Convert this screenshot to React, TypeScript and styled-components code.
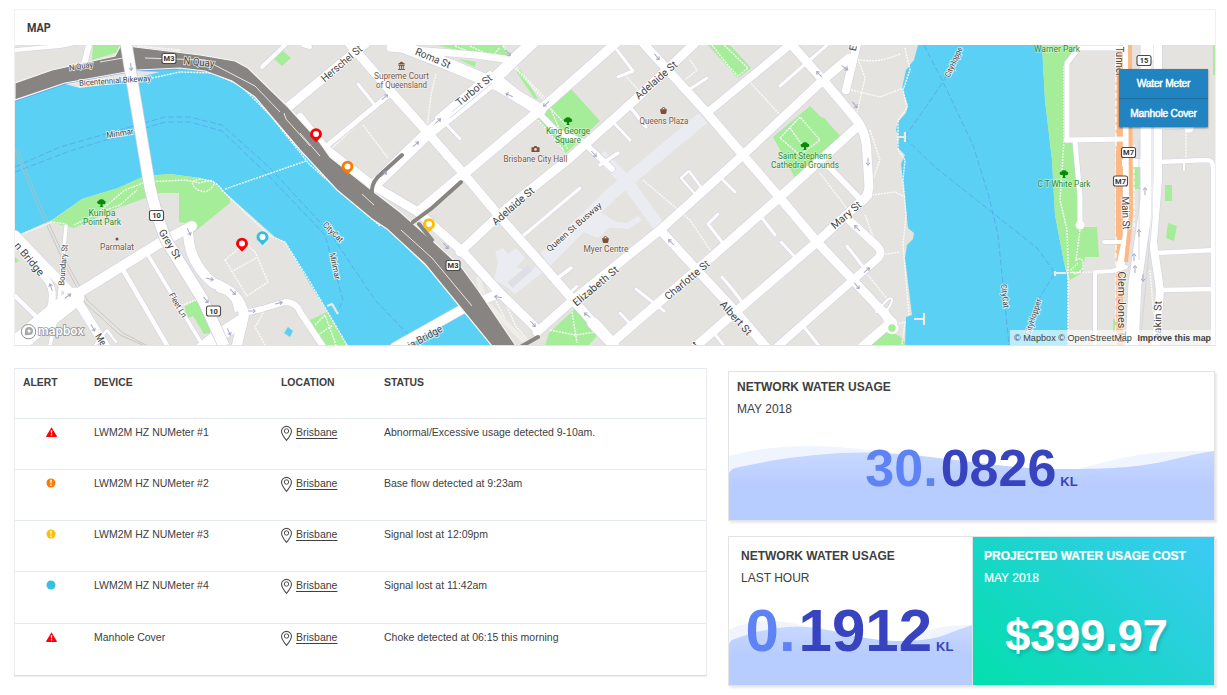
import React from "react";
import styled, { createGlobalStyle } from "styled-components";

const GlobalStyle = createGlobalStyle`
  * { box-sizing: border-box; }
  body { margin: 0; background: #fff; color: #404040; font-family: "Liberation Sans", Arial, sans-serif; }
`;

const Page = styled.main`
  width: 1227px;
  height: 695px;
  padding: 9px 11px 0 14px;
  overflow: hidden;
`;

const MapPanel = styled.section`
  width: 1202px;
  height: 337px;
  border: 1px solid #f0f0f2;
  border-bottom-color: #e4e4e4;
`;

const MapHeader = styled.h2`
  height: 35px;
  margin: 0;
  padding-left: 12px;
  line-height: 34px;
  font-family: Roboto, sans-serif;
  font-weight: 700;
  font-size: 13.5px;
  color: #3c3c3c;
  span { display: inline-block; transform: scaleX(0.8); transform-origin: left; }
`;

const MapArea = styled.div`
  position: relative;
  height: 300px;
  > svg { display: block; }
`;

const Toggle = styled.div`
  position: absolute;
  top: 24px;
  right: 7px;
  width: 89px;
  display: flex;
  flex-direction: column;
  box-shadow: 0 1px 2px rgba(0, 0, 0, 0.5);
`;

const ToggleButton = styled.button`
  height: 29px;
  border: 0;
  padding: 0;
  background: #2184c0;
  color: #fff;
  font: 10.2px "Liberation Sans", Arial, sans-serif;
  letter-spacing: -0.2px;
  -webkit-text-stroke: 0.45px #fff;
  & + & { border-top: 1px solid #1a6d9f; }
`;

const Attribution = styled.div`
  position: absolute;
  right: 0;
  bottom: 0;
  width: 205px;
  height: 15px;
  padding: 0 4px;
  display: flex;
  justify-content: space-between;
  align-items: center;
  background: rgba(255, 255, 255, 0.6);
  font-size: 9.15px;
  white-space: nowrap;
  color: #404040;
  b { font-size: 8.9px; }
`;

const Lower = styled.div`
  display: flex;
  align-items: flex-start;
  gap: 21px;
  margin-top: 22px;
`;

const Table = styled.section`
  width: 693px;
  height: 308px;
  flex: none;
  border: 1px solid #ececf0;
  border-top-color: #e4e9f5;
  border-bottom-color: #dcdcde;
  box-shadow: 0 1px 1px #f0f0f0;
  font-size: 10.5px;
  line-height: 13px;
`;

const Row = styled.div<{ $h: number; $head?: boolean }>`
  display: grid;
  grid-template-columns: 79px 187px 103px 1fr;
  height: ${(p) => p.$h}px;
  border-top: ${(p) => (p.$head ? "0" : "1px solid #e4e9f5")};
  padding-top: 7px;
  font-weight: ${(p) => (p.$head ? 700 : 400)};
`;

const AlertCell = styled.div`
  padding-left: 31px;
  svg { display: block; margin-top: 1px; }
`;
const HeadCell = styled.div<{ $pad?: number }>`
  padding-left: ${(p) => p.$pad ?? 0}px;
  font-size: 10.4px;
`;
const Place = styled.div`
  display: flex;
  gap: 4px;
  align-items: flex-start;
  svg { overflow: visible; }
`;
const PlaceLink = styled.a`
  text-decoration: underline;
  text-underline-offset: 1.5px;
`;

const Cards = styled.div`
  display: flex;
  flex-direction: column;
  gap: 15px;
  padding-top: 3px;
`;

const CardRow = styled.div`
  display: flex;
  width: 487px;
  height: 150px;
  border: 1px solid #e3e3e6;
  box-shadow: 2px 2px 2px #e9e9ea;
`;

const Card = styled.article<{ $pad: string; $cost?: boolean; $divider?: boolean }>`
  position: relative;
  flex: 1;
  padding: ${(p) => p.$pad};
  overflow: hidden;
  border-right: ${(p) => (p.$divider ? "1px solid #dfe3ea" : "0")};
  background: ${(p) => (p.$cost ? "linear-gradient(45deg, #02e0ad 0%, #1bd5cb 45%, #3dcaf5 100%)" : "#fff")};
  color: ${(p) => (p.$cost ? "#fff" : "#404040")};
  -webkit-text-stroke: ${(p) => (p.$cost ? "0.2px #fff" : "0")};
`;

const CardTitle = styled.h3`
  position: relative;
  margin: 0;
  font-size: 12px;
  line-height: 14px;
`;
const CardSub = styled.div`
  position: relative;
  margin-top: 8px;
  font-size: 12px;
  line-height: 14px;
`;

const WaveSvg = styled.svg<{ $h: number }>`
  position: absolute;
  left: 0;
  bottom: 0;
  width: 100%;
  height: ${(p) => p.$h}px;
  display: block;
`;

const Figure = styled.div<{ $size: number; $top: number; $shift?: number }>`
  position: relative;
  display: flex;
  justify-content: center;
  align-items: baseline;
  margin-top: ${(p) => p.$top}px;
  margin-left: ${(p) => p.$shift ?? 0}px;
  font-size: ${(p) => p.$size}px;
  line-height: 60px;
  font-weight: 700;
  color: #3743bf;
`;
const Whole = styled.span`
  color: #5d83f5;
  margin-right: 3px;
`;
const Unit = styled.span`
  margin-left: 4px;
  font-size: 13px;
`;
const Cost = styled(Figure)`
  color: #fff;
  text-shadow: 2px 3px 3px rgba(0, 80, 100, 0.22);
`;

type Road = [string, number];

const roads: Road[] = [
  ["M15 50 L60 46 L90 40", 4],
  ["M89 45 L84 65", 6],
  ["M15 235 L75 297 L108 350", 9],
  ["M15 240 L47 280 Q56 292 50 310 L48 320", 7],
  ["M66 226 L62 270 L58 310 L50 345", 3.5],
  ["M75 297 L48 318 L15 346", 19],
  ["M72 297 L158 244 L192 226", 10],
  ["M15 296 L40 320", 4.5],
  ["M122 268 L168 347", 4.5],
  ["M148 255 L200 341", 3.5],
  ["M188 230 Q188 262 213 283 Q240 292 244 315 L237 345", 10],
  ["M218 290 Q235 294 236 310", 4],
  ["M244 313 L262 309 L285 302 Q296 302 300 312 L324 348", 6],
  ["M200 350 L215 338 L240 322", 13],
  ["M95 345 L107 330 L116 342", 2.5],
  ["M287 108 L366 43", 9],
  ["M262 67 L285 45", 4],
  ["M303 45 L310 47", 4],
  ["M300 117 L325 148 L374 186", 8],
  ["M374 186 L418 212 L463 252 L500 293 L537 329", 9],
  ["M328 145 L390 94", 5],
  ["M358 84 L374 104", 3],
  ["M372 187 L428 133 L490 83 L534 41", 12],
  ["M438 118 L490 74", 6],
  ["M446 124 L460 139", 3],
  ["M393 43 L450 65 L500 86 L540 110", 12],
  ["M390 48 L475 55 L505 59", 7],
  ["M418 212 L465 173 L540 110 L616 43", 9.5],
  ["M349 43 L393 94 L428 133 L463 173 L500 217 L540 262 L573 300 L615 347", 9],
  ["M532 106 L556 131 L583 142 L612 169", 6],
  ["M460 252 L507 208 L570 158 L637 98 L695 43", 9],
  ["M643 43 L707 113 L743 155 L780 198 L817 242 L853 280 L893 323", 9],
  ["M707 113 L792 43", 8],
  ["M790 43 L823 80 L855 118 Q867 132 867 155 L869 187 Q868 197 862 201", 9],
  ["M858 40 L846 90", 8],
  ["M537 332 L573 300 L660 230 L743 155 L823 80 L849 58", 9],
  ["M613 342 L707 261 L780 197 L857 127", 9],
  ["M695 347 L817 242 L868 195", 9],
  ["M776 348 L853 280 L877 259 Q884 253 877 246 L848 219", 8],
  ["M663 233 L697 270 L737 313 L766 347", 9],
  ["M829 167 L862 201", 6],
  ["M862 347 L890 323 L884 312", 9],
  ["M592 323 L615 347", 10],
  ["M595 322 L613 342", 8],
  ["M500 293 L468 306 L395 347", 9],
  ["M524 235 L580 188", 3],
  ["M559 277 L571 268", 3.5],
  ["M568 295 L577 286", 3],
  ["M617 50 L633 71 L618 77", 3],
  ["M690 89 L707 78", 3],
  ["M780 86 L827 45", 3],
  ["M613 122 L630 140", 3],
  ["M631 108 L646 127", 3.5],
  ["M600 165 L618 153", 3.5],
  ["M681 178 L689 171 L701 187 L695 194 Z", 2.5],
  ["M721 178 L735 192", 3],
  ["M708 224 L718 214 M708 224 L722 242", 3],
  ["M762 218 L775 235", 3],
  ["M781 242 L796 258", 3],
  ["M847 246 L864 268", 3],
  ["M722 277 L733 290 L742 302", 3],
  ["M636 289 L664 311", 3],
  ["M620 313 L632 326", 3],
  ["M714 333 L725 347", 3],
  ["M804 327 L820 347", 3],
  ["M876 312 L888 299 Q894 296 891 304 L884 315", 2],
  ["M538 110 L503 82", 7],
  ["M1121 48 L1079 48 L1067 63 L1067 140", 5],
  ["M1066 140 L1128 139", 5],
  ["M1075 141 L1080 196 L1080 226", 5],
  ["M1104 242 L1128 242", 4],
  ["M1095 347 L1095 272 L1112 271 L1126 267", 4],
  ["M1126 43 L1126 140", 6],
  ["M1127 130 L1127 235 L1120 267", 8],
  ["M1147 43 L1147 200 L1135 283 L1132 347", 13],
  ["M1158 43 L1158 180 L1153 242 L1160 290 L1156 347", 8],
  ["M1125 163 L1142 163", 8],
  ["M1158 162 L1207 160 Q1213 160 1213 168 L1213 347", 4.5],
  ["M1157 253 L1215 250", 4.5],
  ["M1160 290 L1215 289", 4.5],
  ["M1157 128 L1187 127", 3],
  ["M1184 162 L1184 170", 2],
];

const greens = [
  "M93 45 L121 45 L118 52 L92 60 Z",
  "M282 50 L291 58 L282 66 L273 58 Z",
  "M50 222 L82 199 L118 188 L145 176 L170 174 L200 178 L216 184 L230 198 L230 203 L193 233 L190 224 L179 222 L179 193 L160 193 L120 207 L74 228 Z",
  "M15 257 L19 261 L15 263 Z",
  "M184 307 L196 300 L209 320 L210 333 L204 334 L193 316 L188 318 Z",
  "M310 320 L327 312 L348 346 L323 346 Z",
  "M437 45 L502 45 L511 57 L470 54 Z",
  "M458 59 L476 62 L475 67 Z",
  "M571 89 L600 121 L566 153 L536 118 L545 110 Z",
  "M516 71 L520 69 L538 99 L534 98 Z",
  "M708 45 L730 45 L751 68 L738 78 Z",
  "M810 106 L821 117 L824 118 L840 136 L795 178 L773 137 Z",
  "M576 308 L598 335 L588 346 L545 346 L549 333 Z",
  "M870 346 L887 330 L903 338 L906 346 Z",
  "M1042 45 L1080 45 L1065 65 L1065 140 L1073 143 L1078 200 L1079 227 L1097 227 L1099 257 L1085 257 L1083 272 L1070 280 L1064 262 L1055 215 L1052 160 L1045 100 Z",
  "M1134 166 L1140 166 L1140 189 L1134 189 Z",
  "M1113 319 L1118 319 L1118 332 L1113 332 Z",
  "M1213 45 L1216 45 L1216 75 L1213 75 Z",
  "M1165 185 L1172 185 L1172 201 L1165 201 Z",
  "M1168 223 L1177 226 L1174 241 L1166 238 Z",
];

const footpaths = [
  "M140 57 L180 50 L137 46",
  "M152 78 L180 72 L212 73 L240 85 L270 115 L310 165 L380 226",
  "M225 189 L306 161",
  "M95 215 L125 190 L146 182 L185 180 L200 183 Q215 178 214 184 Q208 195 198 190 Q186 182 200 179 Q216 180 222 190 L232 200 L270 236 L285 242 L310 282 L347 345",
  "M74 225 L100 212 L120 205 L137 190",
  "M20 235 L52 222 L66 224",
  "M225 260 L245 243 L255 252 L268 282 L247 296 Z M231 272 L256 258",
  "M265 310 L255 327 L265 345 M175 308 L196 300",
  "M315 325 L325 315 L336 345 M318 335 L333 325",
  "M436 74 L431 95 L427 128",
  "M330 150 L365 117 L390 96",
  "M363 125 L388 158",
  "M515 68 L550 107 L568 150 M503 46 L520 72 L545 98",
  "M538 120 L564 150 M552 110 L578 138",
  "M455 46 L490 60 L500 47 M470 46 L500 60",
  "M625 75 L640 92 M690 60 L697 70 L685 80",
  "M712 45 L730 68 L738 76 L748 68 L724 45",
  "M749 81 L780 115",
  "M853 45 L865 78 L853 130 M860 60 Q880 63 900 54 M851 90 L880 97 L903 88 M905 48 L910 70 L903 90 L907 108 L898 120 L898 150 L905 160 L903 180 L906 215 L903 245 L909 315",
  "M870 130 L880 160 L872 182 M872 195 L895 192 L905 197 M865 215 L880 255 L900 252",
  "M780 138 L800 117 L820 140 L800 155 Z M790 128 L806 150",
  "M820 173 L848 210 M643 180 L690 220 L710 250",
  "M868 275 L888 300 M893 325 L905 322 L902 345",
  "M550 330 L575 335 L596 332 M572 312 L577 343",
  "M500 290 L515 325 L530 343 M486 283 L505 318",
  "M1064 66 L1064 140 L1060 200 L1067 230 L1068 262 L1068 345 M1080 230 L1076 260 Q1084 255 1083 268 Q1075 278 1071 270 L1078 263 M1055 273 L1095 272",
  "M1186 128 L1186 160 M1150 270 L1155 330",
];

const ferries = [
  "M15 167 L60 147 L165 117 L190 117 L222 125 L270 168 L330 233 L375 300 L418 345",
  "M15 172 L70 151 L165 122 L190 122 L222 131 L267 174 L325 235 L343 300 L337 313",
  "M924 45 L943 82 L973 145 L989 197 L998 235 L1009 345",
  "M905 137 L943 82 L960 50",
  "M905 138 L935 167 L1037 248 L1055 273 L1040 297 L1026 345",
];

type Label = [string, number, number, number, number, number];
// text, centre x, centre y, rotation, length, font size
const streetLabels: Label[] = [
  ["N Quay", 81, 66, -8, 24, 7.8],
  ["N Quay", 199, 62, 6, 31, 10.5],
  ["Bicentennial Bikeway", 115, 80.5, -4, 72, 8.2],
  ["Mirimar", 120, 133, -9, 27, 8.2],
  ["Grey St", 170, 244, 58, 33, 10.5],
  ["Boundary St", 63, 265, -85, 41, 8.2],
  ["Fleet Ln", 178, 305, 60, 27, 8.2],
  ["n Bridge", 29.5, 259, 50, 40, 10.5],
  ["Me", 101, 339.5, 58, 12, 10],
  ["Herschel St", 341.5, 63.5, -40, 50, 10.5],
  ["Roma St", 433, 58, 23, 37, 10.5],
  ["Turbot St", 474, 90, -39, 43, 10.5],
  ["Adelaide St", 656, 80, -41, 52, 10.5],
  ["Adelaide St", 513, 206, -41, 52, 10.5],
  ["Queen St Busway", 574, 227, -41, 70, 8.5],
  ["Elizabeth St", 595.5, 286, -40, 56, 10.5],
  ["Charlotte St", 687, 280, -40, 55, 10.5],
  ["Albert St", 736, 318, 48, 42, 10.5],
  ["Mary St", 846, 215, -41, 36, 10.5],
  ["E", 853, 48, -78, 5.5, 10],
  ["t", 695, 344, -41, 3, 10],
  ["CityCat", 333, 232, 45, 25, 8.2],
  ["Mirimar", 335, 266, 78, 27, 8.2],
  ["CityHoppe", 953.5, 62, -66, 32, 8.2],
  ["CityCat", 1005, 296, 83, 24, 8.2],
  ["CityHopper", 1033, 317, -72, 38, 8.2],
  ["ia Bridge", 425, 337, -29, 38, 10.5],
  ["Main St", 1126, 213, 88, 33, 10.5],
  ["Tunnel", 1119.5, 61, 90, 29, 10.5],
  ["Clem Jones Tu", 1121.5, 307, 90, 71, 10.5],
  ["eakin St", 1157.5, 320, -89, 38, 10.5],
];

const poiLabels: [string, number, number, number, boolean?][] = [
  ["Supreme Court", 401.5, 79, 55],
  ["of Queensland", 401.5, 88, 51],
  ["King George", 568, 133.5, 44, true],
  ["Square", 568, 142.5, 26, true],
  ["Brisbane City Hall", 535.5, 161.5, 64],
  ["Queens Plaza", 664, 123.5, 49],
  ["Saint Stephens", 805, 159, 54, true],
  ["Cathedral Grounds", 805, 168, 68, true],
  ["Myer Centre", 606, 252, 45],
  ["Kurilpa", 102, 215.5, 27, true],
  ["Point Park", 102, 224.5, 38, true],
  ["Parmalat", 117, 250, 34],
  ["Warner Park", 1057, 52, 46, true],
  ["C T White Park", 1064, 187, 53, true],
];

const shields: [string, number, number][] = [
  ["M3", 169, 58.5], ["M3", 453, 265.5], ["10", 156.5, 215.5], ["10", 213.5, 311],
  ["15", 1144, 60.5], ["M7", 1128.5, 152.5], ["M7", 1120.5, 181],
];

const arrows: [number, number, number][] = [
  [131, 67, 85], [385, 97, -42], [416, 144, -40], [438, 121, -40], [509, 95, 205], [546, 104, 138],
  [508, 53, 50], [384, 174, -40], [594, 154, 48], [657, 57, 50], [819, 74, 225], [845, 68, 35],
  [855, 105, 50], [868, 162, 90], [446, 246, 48], [498, 297, 190], [533, 324, 48], [587, 315, 215],
  [671, 242, 225], [857, 228, 225], [867, 270, -40], [857, 286, 50], [189, 232, 65], [210, 279, 15],
  [233, 292, 45], [206, 300, 50], [229, 332, 65], [252, 311, 0], [279, 303, -15], [93, 328, 60],
  [68, 296, -35], [51, 287, 250], [1145, 191, -90], [1139, 233, -90], [1134, 257, -90], [1135, 269, -90], [1143, 278, 90],
];

const pins: [number, number, string][] = [
  [316, 134.5, "#fb0007"], [347.5, 167, "#ff7800"], [429, 224.5, "#ffbf00"], [242, 244, "#fb0007"], [262.5, 237.5, "#31bfdf"],
];

const Tree = ({ x, y }: { x: number; y: number }) => (
  <path transform={`translate(${x} ${y})`} fill="#0a8a0a" d="M-4.3 0 Q-4.8-2-2.6-2.4 Q-1.8-4 0-3.8 Q2-4 2.6-2.4 Q4.6-2 4.2 0 Q3.5 1.6 1 1.2 L1 3 L2 4 L-2 4 L-1 3 L-1 1.2 Q-3.5 1.6-4.3 0Z" />
);

const Basket = ({ x, y }: { x: number; y: number }) => (
  <g transform={`translate(${x} ${y})`}>
    <path d="M-2 -1 Q-1.5-3 0-3 Q1.5-3 2-1" fill="none" stroke="#7d5138" />
    <path d="M-3.5-1.2 L3.5-1.2 L2.6 3 Q2.4 3.4 2 3.4 L-2 3.4 Q-2.4 3.4-2.6 3Z" fill="#7d5138" />
  </g>
);

const riverWest =
  "M15 100 L65 83 L137 70 L180 68 L205 71 L232 81 L255 97 L300 150 L337 190 L372 219 L387 229 L440 280 L461 308 L492 346 L347 346 L330 316 L310 284 L285 242 L275 237 L230 197 L216 184 L200 178 L170 174 L145 176 L118 188 L82 199 L52 220 L20 234 L15 232 Z";
const riverEast =
  "M918 45 L914 60 L906 70 L902 88 L908 105 L906 113 L898 122 L896 130 L899 137 L897 147 L905 155 L901 164 L904 190 L908 228 L914 233 L913 239 L907 245 L905 258 L912 315 L906 317 L905 346 L1068 346 L1068 280 L1064 262 L1055 215 L1052 160 L1045 100 L1042 45 Z";
const motorway =
  "M15 83 L52 70 L115 56 L121 45 L135 47 L200 55 L235 61 L248 68 L288 107 L318 140 L330 157 L374 192 L400 212 L435 243 L462 268 L478 290 L516 346 L492 346 L461 308 L425 264 L387 229 L372 219 L337 190 L300 150 L255 97 L232 81 L205 71 L180 68 L137 70 L65 83 L15 100 Z";

function CityMap() {
  return (
    <svg width="1200" height="300" viewBox="15 45 1200 300" fontFamily="Roboto, sans-serif">
      <rect x="15" y="45" width="1201" height="301" fill="#e4e3df" />
      <path d={riverWest} fill="#5ad1f4" />
      <path d={riverEast} fill="#5ad1f4" />
      <path d="M15 101 L65 84 L137 71 L178 69" fill="none" stroke="#6b9df5" strokeWidth="1.2" />
      <path d="M65 84 L137 71 L160 72 L110 84 L80 88 Z" fill="#e9e7e2" />
      <path d="M288 327 L293 331 L290 337 L284 333 Z" fill="#5ad1f4" />
      {ferries.map((d) => (
        <path key={d} d={d} fill="none" stroke="#5aa9ea" strokeWidth="0.9" strokeDasharray="6 2.5" />
      ))}
      {greens.map((d) => (
        <path key={d} d={d} fill="#a5ed99" />
      ))}
      <path d="M498 262 L495 252 L503 248 L508 254 L516 248 L525 258 L516 267 L530 272 L540 262 L552 252 L600 212 L616 222 L598 238 L584 232 L548 268 L515 294 L505 286 L494 280 Z" fill="#ebecf1" />
      <g fill="none" stroke="#ebecf1" strokeLinecap="butt">
        <path d="M545 258 L610 195 L703 118" strokeWidth="13" />
        <path d="M600 155 L627 182 L660 228" strokeWidth="12" />
        <path d="M578 222 L628 226 L640 218" strokeWidth="6" />
        <path d="M510 285 L530 268" strokeWidth="7" stroke="#dedfe6" />
      </g>
      <path d="M478 277 L484 300 L508 325 L528 345" fill="none" stroke="#efede8" strokeWidth="5" />
      <g stroke="#bdbcba" strokeWidth="0.7" fill="none">
        <path d="M15 150 L35 200 L65 265 L85 303 L120 335 L145 346" />
        <path d="M18 150 L38 200 L68 265 L88 301 L123 333 L148 346" />
      </g>
      {footpaths.map((d) => (
        <path key={d} d={d} fill="none" stroke="#fafafa" strokeWidth="1.4" strokeDasharray="2 1" />
      ))}
      <path d="M914 319 L924 319 M924 313 L924 325 M898 137 L905 137 M905 132 L905 142 M327 306 L332 304 L338 314 M1055 273 L1066 273 M1055 271 L1055 276" fill="none" stroke="#eceae6" strokeWidth="2.2" />
      <g fill="none" stroke="#d3d3e2" strokeLinejoin="round" strokeLinecap="round">
        {roads.map(([d, w]) => (
          <path key={d} d={d} strokeWidth={w + 1.2} />
        ))}
      </g>
      <path d="M1119.5 45 L1119.5 346" stroke="#ffb884" strokeWidth="6.5" />
      <path d="M1116 45 L1116 346" stroke="#fff" strokeWidth="1.2" strokeDasharray="5 3" />
      <g fill="none" stroke="#fff" strokeLinejoin="round" strokeLinecap="round">
        {roads.map(([d, w]) => (
          <path key={d} d={d} strokeWidth={w} />
        ))}
      </g>
      <path d="M1119 150 L1119 235 M1119.5 276 L1119.5 346" stroke="#ffb884" strokeWidth="6" />
      <path d="M1130 45 L1131 215 L1126 262" fill="none" stroke="#ffb884" strokeWidth="4" />
      <path d="M1134 145 L1134 230" stroke="#fff" strokeWidth="1.2" strokeDasharray="4 2" />
      <circle cx="1080" cy="225" r="4.5" fill="#fff" />
      <circle cx="1189" cy="128" r="4.5" fill="#fff" />
      <circle cx="892" cy="328" r="5" fill="#a5ed99" stroke="#fff" strokeWidth="2.5" />
      <path d="M450 118 L492 83 M452 112 L480 88" stroke="#d3d3e2" strokeWidth="0.9" />
      <path d="M1139 140 L1139 260 M1152 60 L1152 220 L1140 345" stroke="#d3d3e2" strokeWidth="0.9" fill="none" />
      <path d={motorway} fill="#878481" stroke="#f6f6f4" strokeWidth="1.2" />
      <path d="M372 192 Q371 182 382 173 L402 155 M413 222 L432 208 L461 182 M419 224 L432 240 M522 346 L538 337" fill="none" stroke="#878481" strokeWidth="4" strokeLinecap="round" />
      <path d="M100 62 L123 58 M145 58 L205 60 L232 74 L255 86 L280 112 M284 113 L286 119 L310 146 M300 133 L320 156 M362 194 L374 205 M401 230 L432 258 L472 306" fill="none" stroke="#f2f2f0" strokeWidth="0.9" />
      <g fill="none" strokeLinejoin="round">
        <path d="M126 43 L132 80 L150 188 L157 215 L166 240 L203 300 L224 346" stroke="#cfcfdf" strokeWidth="12.5" />
        <path d="M126 43 L132 80 L150 188 L157 215 L166 240 L203 300 L224 346" stroke="#fff" strokeWidth="11" />
      </g>
      {arrows.map(([x, y, a]) => (
        <path key={`${x}-${y}`} transform={`translate(${x} ${y}) rotate(${a})`} d="M-4 0 L3 0 M0.8 -2 L3.4 0 L0.8 2" fill="none" stroke="#a9a9c6" strokeWidth="1" />
      ))}
      <g fill="#454545" stroke="rgba(255,255,255,0.75)" strokeWidth="1.8" paintOrder="stroke" textAnchor="middle">
        {streetLabels.map(([t, x, y, a, len, size]) => (
          <text key={`${t}${x}`} transform={`translate(${x} ${y}) rotate(${a})`} dy="0.35em" fontSize={size} textLength={len} lengthAdjust="spacingAndGlyphs">{t}</text>
        ))}
      </g>
      <g strokeWidth="1.4" stroke="rgba(255,255,255,0.45)" paintOrder="stroke" textAnchor="middle" fontSize="8.4">
        {poiLabels.map(([t, x, y, len, green]) => (
          <text key={t} x={x} y={y} fill={green ? "#2a8a32" : "#80593f"} textLength={len} lengthAdjust="spacingAndGlyphs">{t}</text>
        ))}
      </g>
      <Tree x={568} y={121} />
      <Tree x={805} y={146} />
      <Tree x={101.5} y={203} />
      <Tree x={1064} y={174} />
      <Basket x={663.5} y={110.5} />
      <Basket x={605.5} y={239.5} />
      <circle cx="117" cy="239" r="1.5" fill="#7d5138" />
      <path d="M532 147.2 L533.8 147.2 L534.4 146 L536.6 146 L537.2 147.2 L539.5 147.2 L539.5 152 L531.5 152 L531.5 147.2Z" fill="#7d5138" />
      <circle cx="535.5" cy="149.4" r="1.3" fill="#e4e3df" />
      <path d="M398.5 64 L401.5 62 L404.5 64Z M398.5 65.5 H404.5 M399.7 65 V69 M401.5 65 V69 M403.3 65 V69 M398 69.5 H405" stroke="#7d5138" strokeWidth="0.9" fill="#7d5138" />
      {shields.map(([t, x, y]) => (
        <g key={`${t}${x}`}>
          <rect x={x - 7} y={y - 5} width="14" height="10" rx="2" fill="#fff" stroke="#4a4a4a" strokeWidth="1.1" />
          <text x={x} y={y + 2.7} textAnchor="middle" fontSize="7.5" fontWeight="700" fill="#333">{t}</text>
        </g>
      ))}
      {pins.map(([x, y, c]) => (
        <g key={x} transform={`translate(${x} ${y})`}>
          <path d="M0 7.8 L-3.6 4 Q-6 2.3-6 -0.2 A6 6 0 0 1 6 -0.2 Q6 2.3 3.6 4Z" fill={c} />
          <circle cy="-0.5" r="3" fill="#fff" />
        </g>
      ))}
      <g stroke="#919191" strokeWidth="1">
        <circle cx="28.5" cy="331.7" r="7.2" fill="#fff" />
        <circle cx="29" cy="331" r="4" fill="#a8a8a8" stroke="none" />
        <path d="M29 328.5 L29.8 330.2 L31.5 331 L29.8 331.8 L29 333.5 L28.2 331.8 L26.5 331 L28.2 330.2Z" fill="#fff" stroke="none" />
        <path d="M25 331 L24.8 335.2 L29 335Z" fill="#a8a8a8" stroke="none" />
        <text x="38" y="335.3" fontFamily="Inter, sans-serif" fontWeight="600" fontSize="12.5" textLength="46" lengthAdjust="spacingAndGlyphs" fill="#fff" strokeWidth="1.6" paintOrder="stroke">mapbox</text>
      </g>
    </svg>
  );
}

type Level = "critical" | "high" | "medium" | "info";

function AlertIcon({ level }: { level: Level }) {
  if (level === "critical")
    return (
      <svg width="11" height="10" viewBox="0 0 10 10" preserveAspectRatio="none">
        <path d="M5 0.2 L9.9 9.2 Q10 9.8 9.5 9.9 L0.5 9.9 Q0 9.8 0.1 9.2Z" fill="#fb0007" />
        <path d="M4.3 3.2 H5.7 L5.4 6.4 H4.6Z M4.4 7.2 H5.6 V8.5 H4.4Z" fill="#fff" />
      </svg>
    );
  const color = { high: "#ff7800", medium: "#ffbf00", info: "#35c2e2" }[level];
  return (
    <svg width="10" height="10" viewBox="0 0 10 10">
      <circle cx="5" cy="5" r="4.5" fill={color} />
      {level !== "info" && <path d="M4.2 1.8 H5.8 L5.5 5.6 H4.5Z M4.3 6.4 H5.7 V7.9 H4.3Z" fill="#fff" />}
    </svg>
  );
}

const PlaceIcon = () => (
  <svg width="11" height="15" viewBox="0 0 11 15" fill="none" stroke="#505050">
    <path d="M5.5 14.4 Q0.5 8.2 0.5 5.2 A5 4.8 0 0 1 10.5 5.2 Q10.5 8.2 5.5 14.4Z" strokeWidth="1.1" />
    <circle cx="5.5" cy="5" r="2.2" strokeWidth="1" />
  </svg>
);

const alerts: { level: Level; device: string; status: string; h: number }[] = [
  { level: "critical", device: "LWM2M HZ NUMeter #1", status: "Abnormal/Excessive usage detected 9-10am.", h: 51 },
  { level: "high", device: "LWM2M HZ NUMeter #2", status: "Base flow detected at 9:23am", h: 51 },
  { level: "medium", device: "LWM2M HZ NUMeter #3", status: "Signal lost at 12:09pm", h: 51 },
  { level: "info", device: "LWM2M HZ NUMeter #4", status: "Signal lost at 11:42am", h: 52 },
  { level: "critical", device: "Manhole Cover", status: "Choke detected at 06:15 this morning", h: 52 },
];

function Wave({ id, h }: { id: string; h: number }) {
  return (
    <WaveSvg $h={h} viewBox="0 0 486 74" preserveAspectRatio="none">
      <defs>
        <linearGradient id={id} x1="0" y1="0" x2="0" y2="1">
          <stop offset="0" stopColor="#c8d9ff" />
          <stop offset="0.5" stopColor="#b8ccff" />
          <stop offset="1" stopColor="#b7ccff" />
        </linearGradient>
      </defs>
      <path d="M0 10 C50 -4 110 -2 165 8 C230 21 290 33 350 23 C390 13 410 4 486 5 L486 74 L0 74Z" fill="#eff4fe" />
      <path d="M0 27 Q2 23 6 22 C60 10 110 5 155 7 C220 10 270 24 345 23 C430 23 440 12 486 5 L486 74 L0 74Z" fill={`url(#${id})`} />
    </WaveSvg>
  );
}

export default function App() {
  return (
    <>
      <GlobalStyle />
      <Page>
        <MapPanel>
          <MapHeader><span>MAP</span></MapHeader>
          <MapArea>
            <CityMap />
            <Toggle>
              <ToggleButton>Water Meter</ToggleButton>
              <ToggleButton>Manhole Cover</ToggleButton>
            </Toggle>
            <Attribution>
              <span>© Mapbox © OpenStreetMap</span>
              <b>Improve this map</b>
            </Attribution>
          </MapArea>
        </MapPanel>
        <Lower>
          <Table>
            <Row $h={49} $head>
              <HeadCell $pad={8}>ALERT</HeadCell>
              <HeadCell>DEVICE</HeadCell>
              <HeadCell>LOCATION</HeadCell>
              <HeadCell>STATUS</HeadCell>
            </Row>
            {alerts.map((a) => (
              <Row key={a.device} $h={a.h}>
                <AlertCell><AlertIcon level={a.level} /></AlertCell>
                <div>{a.device}</div>
                <Place><PlaceIcon /><PlaceLink>Brisbane</PlaceLink></Place>
                <div>{a.status}</div>
              </Row>
            ))}
          </Table>
          <Cards>
            <CardRow>
              <Card $pad="8px 8px">
                <Wave id="wave-month" h={74} />
                <CardTitle>NETWORK WATER USAGE</CardTitle>
                <CardSub>MAY 2018</CardSub>
                <Figure $size={52} $top={22}>
                  <Whole>30.</Whole>0826<Unit>KL</Unit>
                </Figure>
              </Card>
            </CardRow>
            <CardRow>
              <Card $pad="12px 12px" $divider>
                <Wave id="wave-hour" h={64} />
                <CardTitle>NETWORK WATER USAGE</CardTitle>
                <CardSub>LAST HOUR</CardSub>
                <Figure $size={60} $top={16} $shift={-2}>
                  <Whole>0.</Whole>1912<Unit>KL</Unit>
                </Figure>
              </Card>
              <Card $pad="12px 11px" $cost>
                <CardTitle>PROJECTED WATER USAGE COST</CardTitle>
                <CardSub>MAY 2018</CardSub>
                <Cost $size={45} $top={21} $shift={-14}>$399.97</Cost>
              </Card>
            </CardRow>
          </Cards>
        </Lower>
      </Page>
    </>
  );
}
